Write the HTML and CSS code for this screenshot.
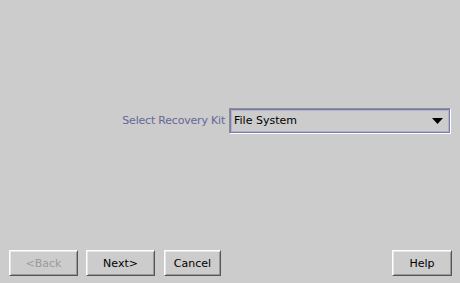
FILE: index.html
```html
<!DOCTYPE html>
<html>
<head>
<meta charset="utf-8">
<link rel="stylesheet" href="styles.css">
</head>
<body>
<div class="panel">
  <div class="content">
    <div class="field-row">
      <span class="field-label">Select Recovery Kit</span>
      <div class="combo">
        <span class="combo-value">File System</span>
        <svg class="combo-arrow" width="11" height="6" viewBox="0 0 11 6"><polygon points="0,0 11,0 5.5,6" fill="#000"/></svg>
      </div>
    </div>
  </div>
  <div class="buttons">
    <div class="btn-group">
      <button class="btn btn-nav btn-disabled">&lt;Back</button>
      <button class="btn btn-nav">Next&gt;</button>
      <button class="btn btn-cancel">Cancel</button>
    </div>
    <button class="btn btn-help">Help</button>
  </div>
</div>
</body>
</html>
```
FILE: styles.css
```css
html, body {
  margin: 0;
  padding: 0;
  background: #cccccc;
}
.panel {
  width: 460px;
  height: 283px;
  display: flex;
  flex-direction: column;
  font-family: "DejaVu Sans", sans-serif;
  font-size: 11px;
  color: #000;
}
.content {
  height: 241px;
  display: flex;
  align-items: center;
  justify-content: flex-end;
  padding-right: 9px;
}
.field-row {
  display: flex;
  align-items: center;
  gap: 4px;
}
.field-label {
  color: #666699;
  letter-spacing: -0.2px;
}
.combo {
  box-sizing: border-box;
  width: 222px;
  height: 26px;
  display: flex;
  align-items: center;
  justify-content: space-between;
  padding: 0 7px 0 4px;
  background: #cccccc;
  border: 1px solid;
  border-color: #8e8e8e #ffffff #ffffff #8e8e8e;
  box-shadow: inset 1px 1px 0 #7a7aa8, inset -1px -1px 0 #7a7aa8, inset 2px 2px 0 #b0b0d4, inset -2px -2px 0 #b0b0d4;
}
.combo-value {
  color: #000;
}
.combo-arrow {
  display: block;
}
.buttons {
  display: flex;
  justify-content: space-between;
  align-items: flex-start;
  padding: 9px 8px 0 9px;
}
.btn-group {
  display: flex;
  gap: 8px;
}
.btn {
  box-sizing: border-box;
  height: 26px;
  margin: 0;
  padding: 0;
  font-family: "DejaVu Sans", sans-serif;
  font-size: 11px;
  color: #000;
  background: #cccccc;
  border: 1px solid;
  border-color: #ffffff #555555 #555555 #ffffff;
  box-shadow: inset 1px 1px 0 #e6e6e6, inset -1px -1px 0 #999999;
  text-align: center;
}
.btn-nav {
  width: 69px;
}
.btn-cancel {
  width: 57px;
  margin-left: 1px;
}
.btn-help {
  width: 60px;
}
.btn-disabled {
  color: #9a9a9a;
}
```
